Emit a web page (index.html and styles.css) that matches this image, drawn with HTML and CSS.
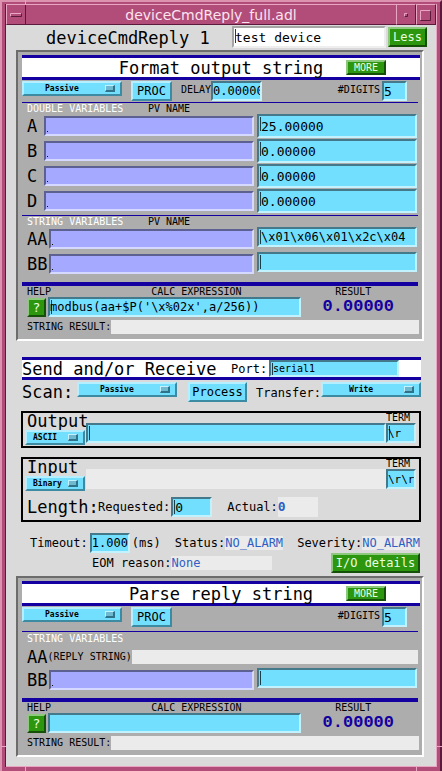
FILE: index.html
```html
<!DOCTYPE html>
<html lang="en">
<head>
<meta charset="utf-8">
<title>deviceCmdReply_full.adl</title>
<link rel="stylesheet" href="styles.css">
</head>
<body>
<div class="window">
  <header class="titlebar">
    <button class="wm" aria-label="Window menu"><svg width="20" height="20" viewBox="0 0 20 20"><path d="M4.500 12V8.500H15" fill="none" stroke="#e9a6c2"/><path d="M4.500 11.500H15.500V8.500" fill="none" stroke="#5b1a3c"/></svg></button>
    <h1>deviceCmdReply_full.adl</h1>
    <button class="wm" aria-label="Minimize"><svg width="20" height="20" viewBox="0 0 20 20"><path d="M8.500 12V8.500H12" fill="none" stroke="#e9a6c2"/><path d="M8.500 11.500H11.500V8.500" fill="none" stroke="#5b1a3c"/></svg></button>
    <button class="wm" aria-label="Maximize"><svg width="20" height="20" viewBox="0 0 20 20"><path d="M4.500 15V5.500H15" fill="none" stroke="#e9a6c2"/><path d="M4.500 15.500H14.500V5.500" fill="none" stroke="#5b1a3c"/></svg></button>
  </header>
  <i class="tick tick-tl"></i><i class="tick tick-l"></i><i class="tick tick-r"></i><i class="tick tick-bl"></i><i class="tick tick-br"></i>

  <main>
    <div class="head">
      <h2 class="big">deviceCmdReply 1</h2>
      <input class="field white caret" aria-label="Description" value="test device">
      <button class="btn green">Less</button>
    </div>

    <section class="panel">
      <div class="banner"><h3 class="big">Format output string</h3><button class="btn green small">MORE</button></div>
      <div class="tools">
        <span class="menu"><select aria-label="Format scan"><option>Passive</option></select></span>
        <button class="btn cyan">PROC</button>
        <label class="delay" for="delay">DELAY</label><input id="delay" class="field text narrow" value="0.00000">
        <label class="digits" for="dig1">#DIGITS</label><input id="dig1" class="field value tiny" value="5">
      </div>
      <div class="caps"><span class="light">DOUBLE VARIABLES</span><span>PV NAME</span></div>
      <div class="var"><label class="big" for="a">A</label><input class="field pv" aria-label="A PV name"><input id="a" class="field value tall caret" value="25.00000"></div>
      <div class="var"><label class="big" for="b">B</label><input class="field pv" aria-label="B PV name"><input id="b" class="field value tall caret" value="0.00000"></div>
      <div class="var"><label class="big" for="c">C</label><input class="field pv" aria-label="C PV name"><input id="c" class="field value tall caret" value="0.00000"></div>
      <div class="var"><label class="big" for="d">D</label><input class="field pv" aria-label="D PV name"><input id="d" class="field value tall caret" value="0.00000"></div>
      <div class="caps second"><span class="light">STRING VARIABLES</span><span>PV NAME</span></div>
      <div class="var wide"><label class="big" for="aa">AA</label><input class="field pv" aria-label="AA PV name"><input id="aa" class="field text caret" value="\x01\x06\x01\x2c\x04"></div>
      <div class="var wide"><label class="big" for="bb">BB</label><input class="field pv" aria-label="BB PV name"><input id="bb" class="field text caret"></div>
      <div class="calc">
        <span>HELP</span><label for="calc1">CALC EXPRESSION</label><span>RESULT</span>
        <button class="btn green help">?</button><input id="calc1" class="field text caret" value="modbus(aa+$P('\x%02x',a/256))"><output class="result">0.00000</output>
      </div>
      <div class="strres"><label for="sr1">STRING RESULT:</label><output id="sr1" class="readout"></output></div>
    </section>

    <section class="io">
      <div class="banner port"><h3 class="big">Send and/or Receive</h3><label for="port">Port:</label><input id="port" class="field caret" value="serial1"></div>
      <div class="scan">
        <label class="big" for="scan">Scan:</label><span class="menu"><select id="scan"><option>Passive</option></select></span>
        <button class="btn cyan process">Process</button>
        <label for="transfer">Transfer:</label><span class="menu write"><select id="transfer"><option>Write</option></select></span>
      </div>

      <div class="box">
        <div class="line">
          <div class="kind"><h4 class="big">Output</h4><span class="menu short"><select aria-label="Output format"><option>ASCII</option></select></span></div>
          <input class="field text caret grow" aria-label="Output string">
          <div class="term"><label for="t1">TERM</label><input id="t1" class="field text caret" value="\r"></div>
        </div>
      </div>

      <div class="box">
        <div class="line">
          <div class="kind"><h4 class="big">Input</h4><span class="menu short"><select aria-label="Input format"><option>Binary</option></select></span></div>
          <output class="readout grow"></output>
          <div class="term"><label for="t2">TERM</label><input id="t2" class="field text" value="\r\r"></div>
        </div>
        <div class="length">
          <h4 class="big">Length:</h4><label for="req">Requested:</label><input id="req" class="field value caret" value="0">
          <label class="actual" for="act">Actual:</label><output id="act" class="readout number">0</output>
        </div>
      </div>

      <div class="status">
        <label for="timeout">Timeout:</label><input id="timeout" class="field text" value="1.000"><span>(ms)</span>
        <label class="st" for="stat">Status:</label><output id="stat" class="readout alarm">NO_ALARM</output>
        <label class="sev" for="sevr">Severity:</label><output id="sevr" class="readout alarm">NO_ALARM</output>
      </div>
      <div class="eom"><label for="eom">EOM reason:</label><output id="eom" class="readout">None</output><button class="btn green details">I/O details</button></div>
    </section>

    <section class="panel parse">
      <div class="banner"><h3 class="big">Parse reply string</h3><button class="btn green small">MORE</button></div>
      <div class="tools">
        <span class="menu"><select aria-label="Parse scan"><option>Passive</option></select></span>
        <button class="btn cyan">PROC</button>
        <label class="digits" for="dig2">#DIGITS</label><input id="dig2" class="field value tiny" value="5">
      </div>
      <div class="caps"><span class="light">STRING VARIABLES</span></div>
      <div class="reply"><span class="big">AA</span><label for="reply">(REPLY STRING)</label><output id="reply" class="readout"></output></div>
      <div class="var wide"><label class="big" for="bb2">BB</label><input class="field pv" aria-label="Reply BB PV name"><input id="bb2" class="field text caret"></div>
      <div class="calc">
        <span>HELP</span><label for="calc2">CALC EXPRESSION</label><span>RESULT</span>
        <button class="btn green help">?</button><input id="calc2" class="field text"><output class="result">0.00000</output>
      </div>
      <div class="strres"><label for="sr2">STRING RESULT:</label><output id="sr2" class="readout"></output></div>
    </section>
  </main>
</div>
</body>
</html>
```
FILE: styles.css
```css
:root {
  --mono: "DejaVu Sans Mono", "Liberation Mono", monospace;
  --cyan: #73dfff;
  --blue: #1400a0;
  --rose: #b24d7a;
  --rose-light: #e9a6c2;
  --rose-dark: #5b1a3c;
}
* { box-sizing: border-box; }
body { margin: 0; background: #dadada; color: #000; font: 12px/14px var(--mono); }
h1, h2, h3, h4 { margin: 0; font-weight: normal; }
button, input, select { font: inherit; color: inherit; margin: 0; border-radius: 0; }
input { min-width: 0; }
.big { font: 17px/20px var(--mono); white-space: nowrap; }

/* window frame */
.window {
  position: relative;
  border: solid var(--rose);
  border-width: 4px 5px 5px 5px;
  box-shadow: inset 1px 0 var(--rose-dark), inset -1px -1px var(--rose-light);
  padding: 0 1px 1px;
}
.window::before {
  content: "";
  position: absolute;
  inset: -4px -5px -5px;
  border: 2px solid;
  border-color: #dc93b0 var(--rose-dark) var(--rose-dark) #dc93b0;
  border-bottom-width: 1px;
  pointer-events: none;
}
.titlebar { display: flex; height: 21px; background: var(--rose); color: #fff; }
.titlebar h1 {
  flex: 1;
  font: 14px/20px "DejaVu Sans", sans-serif;
  text-align: center;
  color: #fbe3ee;
  border-top: 1px solid var(--rose-light);
  border-bottom: 1px solid var(--rose-dark);
}
.wm {
  width: 20px;
  padding: 0;
  background: var(--rose);
  border: 1px solid;
  border-color: var(--rose-light) var(--rose-dark) var(--rose-dark) var(--rose-light);
  line-height: 0;
  overflow: hidden;
}
.wm svg { margin: -1px; }
.tick { position: absolute; background: var(--rose-light); }
.tick-tl { left: 20px; top: -4px; width: 1px; height: 5px; }
.tick-l { left: -4px; bottom: 20px; width: 5px; height: 1px; }
.tick-r { right: -5px; bottom: 20px; width: 5px; height: 1px; }
.tick-bl { left: 20px; bottom: -4px; width: 1px; height: 4px; }
.tick-br { right: 20px; bottom: -4px; width: 1px; height: 4px; }

/* controls */
.field {
  height: 20px;
  padding: 0 0 0 2px;
  border: 2px solid;
  border-color: #43798a #c3f2ff #c3f2ff #43798a;
  background: var(--cyan);
  outline: none;
}
.value { font-size: 13px; }
.text { font-size: 12px; }
.caret { background-image: linear-gradient(#173f4c, #173f4c); background-size: 1px 14px; background-position: 1px 1px; background-repeat: no-repeat; }
.white { background-color: #fff; border-color: #a5a5a5 #eee #eee #a5a5a5; }
.pv {
  border-color: #5d6191 #d6d9ff #d6d9ff #5d6191;
  background: linear-gradient(#111, #111) 1px 13px / 1px 1px no-repeat #a5a9ff;
}
.readout { display: block; min-width: 0; height: 14px; background: #ebebeb; color: #2e5fc4; white-space: nowrap; overflow: hidden; }
.btn { padding: 0; border: 2px solid; white-space: nowrap; line-height: 14px; }
.green { background: #2d960f; color: #e8ffe0; border-color: #8cc97c #155008 #155008 #8cc97c; }
.cyan { background: var(--cyan); border-color: #b5efff #3d8ba3 #3d8ba3 #b5efff; font-size: 12px; }
.menu {
  position: relative;
  display: block;
  width: 100px;
  height: 15px;
  background: var(--cyan);
  border: 2px solid;
  border-color: #b5efff #3d8ba3 #3d8ba3 #b5efff;
}
.menu select {
  display: block;
  width: 100%;
  height: 11px;
  padding: 0 0 0 21px;
  border: 0;
  appearance: none;
  background: none;
  outline: none;
  font: bold 8px/11px var(--mono);
}
.menu::after {
  content: "";
  box-sizing: border-box;
  position: absolute;
  right: 5px;
  top: 2px;
  width: 10px;
  height: 7px;
  border: 1px solid;
  border-color: #c3f2ff #2f7388 #2f7388 #c3f2ff;
  border-width: 1px 2px 2px 1px;
  background: #6fb9d0;
  pointer-events: none;
}

/* top row */
.head { display: flex; gap: 2px; padding: 1px 9px 0 40px; height: 25px; }
.head h2 { width: 184px; padding-top: 2px; }
.head .white { flex: 1; height: 22px; font-size: 13px; padding-left: 1px; }
.head .green { width: 39px; height: 20px; margin-top: 1px; }

/* panels */
.panel {
  margin: 0 12px 0 10px;
  padding: 3px 2px 5px 4px;
  border: 2px solid;
  border-color: #6c6c6c #fff #fff #6c6c6c;
  background: #adadad;
}
.banner {
  display: flex;
  align-items: center;
  height: 25px;
  background: #fff;
  border: solid var(--blue);
  border-width: 3px 0;
}
.banner h3 { flex: 1; text-align: center; }
.panel .banner { position: relative; }
.panel .banner .small { position: absolute; right: 34px; top: 2px; }
.small { width: 40px; height: 15px; font-size: 10px; line-height: 10px; }
.tools { display: flex; align-items: flex-start; padding: 1px 13px 0 0; height: 22px; font: 10px/18px var(--mono); }
.tools .cyan { width: 41px; height: 20px; margin-left: 9px; }
.delay { margin-left: 9px; }
.narrow { width: 51px; padding-left: 0; }
.tiny { width: 25px; padding-left: 0; }
.digits { margin-left: auto; padding-right: 2px; }
.caps {
  display: flex;
  height: 12px;
  border-top: 1px solid var(--blue);
  margin-right: 2px;
  padding-left: 5px;
  font: 10px/12px var(--mono);
}
.caps .light { width: 121px; color: #fff; }
.second { margin-top: 1px; }
.var {
  display: grid;
  grid-template-columns: 14px 210fr 160fr;
  column-gap: 3px;
  align-items: start;
  height: 25px;
  margin-right: 3px;
  padding-left: 5px;
}
.var.wide { grid-template-columns: 19px 205fr 160fr; }
.var label { line-height: 25px; }
.pv { margin-top: 2px; }
.var .field { width: 100%; }
.var .tall { height: 24px; font-size: 13px; }
.calc {
  display: grid;
  grid-template-columns: 19px 254fr 116fr;
  grid-template-rows: 11px 21px;
  column-gap: 2px;
  margin: 5px 2px 0 0;
  padding-left: 5px;
  border-top: 4px solid var(--blue);
  font: 10px/12px var(--mono);
}
.calc > span:nth-of-type(2) { text-align: center; padding-right: 14px; }
.calc > label { text-align: center; padding-left: 44px; }
.calc .field { padding-left: 0; }
.help { height: 19px; margin-top: 1px; font: 13px/14px var(--mono); }
.result { padding-right: 4px; font: bold 17px/20px "Liberation Mono", monospace; color: var(--blue); text-align: center; }
.strres { display: flex; align-items: center; margin-top: 2px; padding: 0 1px 0 5px; font: 10px/14px var(--mono); }
.strres .readout { flex: 1; }

/* send and receive */
.io { margin: 16px 15px 0; }
.port { height: 23px; }
.port h3 { flex: none; width: 209px; }
.port .big { text-align: left; }
.port label { width: 38px; }
.port .field { flex: 1; height: 17px; margin-right: 22px; font-size: 10px; }
.banner.port { margin-left: 1px; }
.scan { display: flex; align-items: flex-start; padding: 2px 0 0 1px; height: 31px; }
.scan .big { width: 55px; }
.scan > label:not(.big) { padding-top: 4px; margin-left: auto; }
.process { width: 59px; height: 20px; margin-left: 11px; }
.write select { padding-left: 26px; }
.box { border: 2px solid #000; margin-bottom: 9px; padding: 0 3px 0 2px; }
.line { display: flex; align-items: flex-end; height: 33px; }
.kind { width: 61px; height: 33px; }
.kind h4 { padding-left: 2px; height: 17px; line-height: 17px; }
.short { width: 60px; }
.short select { padding-left: 6px; }
.grow { flex: 1; margin-bottom: 3px; }
.readout.grow { height: 20px; }
.term { display: flex; flex-direction: column; width: 30px; margin-bottom: 3px; font: 10px/10px var(--mono); }
.term .field { width: 100%; padding-left: 0; }
.term .text { font-size: 11px; }
.length { display: flex; align-items: center; height: 28px; padding: 2px 0 0 2px; }
.length h4 { width: 71px; }
.length .field { width: 41px; margin-left: 1px; }
.actual { margin-left: 15px; }
.readout.number { width: 40px; height: 20px; font: bold 13px/20px var(--mono); }
.status { display: flex; align-items: center; height: 21px; margin-top: 10px; padding: 0 1px 0 9px; }
.status .field { width: 40px; padding: 0; margin: 0 2px; }
.st { margin-left: 14px; }
.sev { margin-left: auto; }
.eom { display: flex; align-items: center; height: 20px; padding: 0 1px 0 71px; }
.eom .readout { width: 101px; }
.details { width: 89px; height: 20px; margin-left: auto; }

/* parse panel */
.parse { margin-top: 3px; margin-bottom: 9px; }
.parse .tools { height: 25px; }
.parse .caps { height: 14px; line-height: 14px; }
.reply { display: flex; align-items: center; height: 23px; padding: 0 2px 0 5px; font: 10px/14px var(--mono); }
.reply .readout { flex: 1; }
```
